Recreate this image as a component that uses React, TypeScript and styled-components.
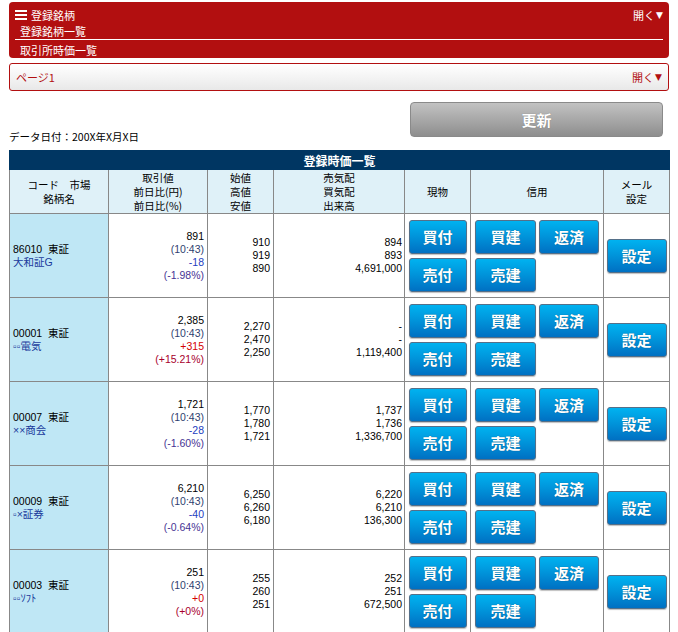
import React from 'react';
import styled, { createGlobalStyle } from 'styled-components';

const Global = createGlobalStyle`
  *, *::before, *::after { box-sizing: border-box; }
  html, body { margin: 0; padding: 0; background: #fff; overflow: hidden; }
  body {
    font-family: "Liberation Sans", "Noto Sans CJK JP", sans-serif;
    font-size: 10.5px;
    color: #000;
  }
`;

const Page = styled.div`
  width: 678px;
  padding: 2px 9px 0 9px;
`;

const MenuBar = styled.div`
  background: #b20f10;
  border-radius: 4px;
  padding: 5px 6px 0 6px;
  color: #fff;
  font-size: 11px;
  font-family: "Noto Sans CJK JP", sans-serif;
`;

const MenuTop = styled.div`
  display: flex;
  justify-content: space-between;
  align-items: center;
  height: 16px;
`;

const MenuTitle = styled.div`
  display: flex;
  align-items: center;
  gap: 4px;
`;

const Toggle = styled.div<{ $color: string }>`
  display: flex;
  align-items: center;
  gap: 1px;
  color: ${(p) => p.$color};
  font-size: 11px;
  line-height: 16px;
`;

const Arrow = styled.span`
  font-size: 9px;
  font-family: "DejaVu Sans", sans-serif;
`;

const MenuLink = styled.div<{ $divider?: boolean }>`
  padding-left: 5px;
  height: ${(p) => (p.$divider ? '17px' : '18px')};
  line-height: 16px;
  padding-top: ${(p) => (p.$divider ? '0' : '2px')};
  border-bottom: ${(p) => (p.$divider ? '1px solid #fff' : 'none')};
`;

const PageBox = styled.div`
  margin-top: 5px;
  height: 28px;
  border: 1px solid #b20f10;
  border-radius: 3px;
  background: linear-gradient(to bottom, #ffffff 0%, #f4f4f4 50%, #e8e8e8 100%);
  display: flex;
  align-items: center;
  justify-content: space-between;
  padding: 0 6px;
  color: #b20f10;
  font-size: 11px;
  font-family: "Noto Sans CJK JP", sans-serif;
`;

const ToolRow = styled.div`
  margin-top: 11px;
  height: 42px;
  display: flex;
  justify-content: space-between;
  align-items: flex-start;
  padding-right: 6px;
`;

const DateText = styled.div`
  align-self: flex-end;
  line-height: 14px;
  font-size: 10.5px;
  font-family: "Noto Sans CJK JP", sans-serif;
`;

const UpdateButton = styled.button`
  width: 253px;
  height: 35px;
  border: 1px solid #8a8a8a;
  border-radius: 4px;
  background: linear-gradient(to bottom, #c2c2c2 0%, #a8a8a8 50%, #8e8e8e 100%);
  color: #fff;
  font: bold 15px "Noto Sans CJK JP", sans-serif;
  text-shadow: 0 0 1px rgba(0, 0, 0, 0.35);
  padding: 0;
`;

const Table = styled.table`
  margin-top: 6px;
  width: 660px;
  border-collapse: collapse;
  table-layout: fixed;
`;

const Col = styled.col<{ $w: number }>`
  width: ${(p) => p.$w}px;
`;

const TitleCell = styled.th`
  height: 19px;
  background: #003662;
  color: #fff;
  font: bold 12px "Noto Sans CJK JP", sans-serif;
  text-align: center;
  border: 1px solid #003662;
  padding: 0;
`;

const HeadCell = styled.th`
  height: 44px;
  background: #dff1f8;
  border: 1px solid #888;
  font-weight: normal;
  font-size: 10.5px;
  font-family: "Noto Sans CJK JP", sans-serif;
  line-height: 14px;
  text-align: center;
  vertical-align: middle;
  padding: 0;
`;

const Cell = styled.td<{ $align?: 'left' | 'right' | 'center'; $bg?: string; $pl?: number; $pr?: number }>`
  height: 84px;
  border: 1px solid #888;
  background: ${(p) => p.$bg || '#fff'};
  text-align: ${(p) => p.$align || 'left'};
  vertical-align: middle;
  line-height: 13px;
  padding: 0 ${(p) => p.$pr ?? 3}px 0 ${(p) => p.$pl ?? 3}px;
`;

const Line = styled.div<{ $color?: string }>`
  color: ${(p) => p.$color || '#000'};
  white-space: nowrap;
`;

const NameLine = styled.div`
  color: #1a3a9c;
  white-space: nowrap;
`;

const Stack = styled.div`
  display: flex;
  flex-direction: column;
  align-items: center;
  gap: 4px;
`;

const Grid2 = styled.div`
  display: grid;
  grid-template-columns: 61px 60px;
  grid-auto-rows: 34px;
  gap: 4px 3px;
  justify-content: center;
`;

const Centered = styled.div`
  display: flex;
  justify-content: center;
`;

const ActionButton = styled.button<{ $w: number }>`
  width: ${(p) => p.$w}px;
  height: 34px;
  border: 1px solid #557089;
  border-radius: 3px;
  background: linear-gradient(to bottom, #00b2f0 0%, #0096dc 45%, #0070c2 100%);
  color: #fff;
  font: bold 15px "Noto Sans CJK JP", sans-serif;
  text-shadow: 0 0 1px rgba(0, 0, 0, 0.45);
  box-shadow: 0 1px 1px rgba(0, 0, 0, 0.25);
  padding: 0;
  display: flex;
  align-items: center;
  justify-content: center;
`;

const Hamburger = () => (
  <svg width="12" height="10" viewBox="0 0 12 10">
    <rect x="0" y="0" width="12" height="2" fill="#fff" />
    <rect x="0" y="4" width="12" height="2" fill="#fff" />
    <rect x="0" y="8" width="12" height="2" fill="#fff" />
  </svg>
);

type Row = {
  code: string;
  name: string;
  price: string;
  change: string;
  pct: string;
  up: boolean;
  ohl: [string, string, string];
  book: [string, string, string];
};

const rows: Row[] = [
  { code: '86010', name: '大和証G', price: '891', change: '-18', pct: '(-1.98%)', up: false, ohl: ['910', '919', '890'], book: ['894', '893', '4,691,000'] },
  { code: '00001', name: '▫▫電気', price: '2,385', change: '+315', pct: '(+15.21%)', up: true, ohl: ['2,270', '2,470', '2,250'], book: ['-', '-', '1,119,400'] },
  { code: '00007', name: '××商会', price: '1,721', change: '-28', pct: '(-1.60%)', up: false, ohl: ['1,770', '1,780', '1,721'], book: ['1,737', '1,736', '1,336,700'] },
  { code: '00009', name: '▫×証券', price: '6,210', change: '-40', pct: '(-0.64%)', up: false, ohl: ['6,250', '6,260', '6,180'], book: ['6,220', '6,210', '136,300'] },
  { code: '00003', name: '▫▫ｿﾌﾄ', price: '251', change: '+0', pct: '(+0%)', up: true, ohl: ['255', '260', '251'], book: ['252', '251', '672,500'] },
];

export default function App() {
  return (
    <Page>
      <Global />
      <MenuBar>
        <MenuTop>
          <MenuTitle>
            <Hamburger />
            <span>登録銘柄</span>
          </MenuTitle>
          <Toggle $color="#fff">
            開く<Arrow>▼</Arrow>
          </Toggle>
        </MenuTop>
        <MenuLink $divider>登録銘柄一覧</MenuLink>
        <MenuLink>取引所時価一覧</MenuLink>
      </MenuBar>

      <PageBox>
        <span>ページ1</span>
        <Toggle $color="#b20f10">
          開く<Arrow>▼</Arrow>
        </Toggle>
      </PageBox>

      <ToolRow>
        <DateText>データ日付：200X年X月X日</DateText>
        <UpdateButton>更新</UpdateButton>
      </ToolRow>

      <Table>
        <colgroup>
          <Col $w={99} />
          <Col $w={99} />
          <Col $w={66} />
          <Col $w={131} />
          <Col $w={66} />
          <Col $w={133} />
          <Col $w={66} />
        </colgroup>
        <thead>
          <tr>
            <TitleCell colSpan={7}>登録時価一覧</TitleCell>
          </tr>
          <tr>
            <HeadCell>
              コード　市場
              <br />
              銘柄名
            </HeadCell>
            <HeadCell>
              取引値
              <br />
              前日比(円)
              <br />
              前日比(%)
            </HeadCell>
            <HeadCell>
              始値
              <br />
              高値
              <br />
              安値
            </HeadCell>
            <HeadCell>
              売気配
              <br />
              買気配
              <br />
              出来高
            </HeadCell>
            <HeadCell>現物</HeadCell>
            <HeadCell>信用</HeadCell>
            <HeadCell>
              メール
              <br />
              設定
            </HeadCell>
          </tr>
        </thead>
        <tbody>
          {rows.map((r) => (
            <tr key={r.code}>
              <Cell $bg="#bfe7f5">
                <Line>{r.code}&nbsp;&nbsp;東証</Line>
                <NameLine>{r.name}</NameLine>
              </Cell>
              <Cell $align="right">
                <Line>{r.price}</Line>
                <Line $color="#2f3f70">(10:43)</Line>
                <Line $color={r.up ? '#d40000' : '#2340c0'}>{r.change}</Line>
                <Line $color={r.up ? '#a8002c' : '#463494'}>{r.pct}</Line>
              </Cell>
              <Cell $align="right">
                <Line>{r.ohl[0]}</Line>
                <Line>{r.ohl[1]}</Line>
                <Line>{r.ohl[2]}</Line>
              </Cell>
              <Cell $align="right" $pr={2}>
                <Line>{r.book[0]}</Line>
                <Line>{r.book[1]}</Line>
                <Line>{r.book[2]}</Line>
              </Cell>
              <Cell $align="center" $pl={0} $pr={0}>
                <Stack>
                  <ActionButton $w={58}>買付</ActionButton>
                  <ActionButton $w={58}>売付</ActionButton>
                </Stack>
              </Cell>
              <Cell $align="center" $pl={0} $pr={0}>
                <Grid2>
                  <ActionButton $w={61}>買建</ActionButton>
                  <ActionButton $w={60}>返済</ActionButton>
                  <ActionButton $w={61}>売建</ActionButton>
                </Grid2>
              </Cell>
              <Cell $align="center" $pl={0} $pr={0}>
                <Centered>
                  <ActionButton $w={60}>設定</ActionButton>
                </Centered>
              </Cell>
            </tr>
          ))}
        </tbody>
      </Table>
    </Page>
  );
}
